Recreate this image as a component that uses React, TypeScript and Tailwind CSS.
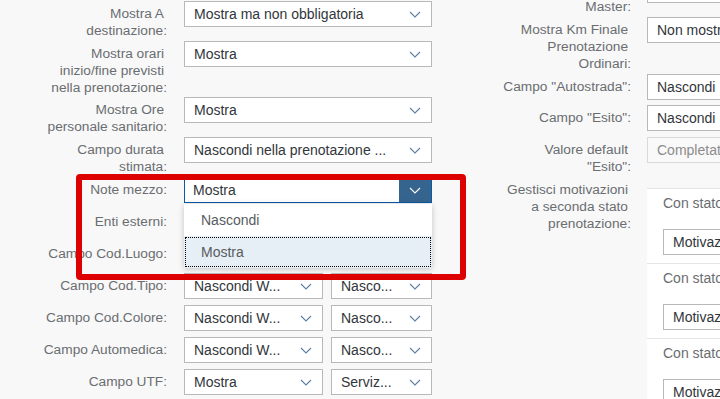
import React from "react";

type Field = { value: string; w?: string; disabled?: boolean };

function Chevron({ className = "" }: { className?: string }) {
  return (
    <svg width="12" height="7" viewBox="0 0 12 7" className={className}>
      <path d="M1 1l5 5 5-5" fill="none" stroke="currentColor" strokeWidth="1.1" />
    </svg>
  );
}

function Select({ value, w = "w-[248px]", disabled }: Field) {
  return (
    <div
      className={`flex h-[26px] shrink-0 items-center border ${w} ${
        disabled ? "border-[#d9d9d9] bg-[#f9f9f9] text-[#8c8c8c]" : "border-[#b8b8b8] bg-white text-[#32363a]"
      }`}
    >
      <span className="flex-1 overflow-hidden whitespace-nowrap pl-[9px]">{value}</span>
      {!disabled && (
        <span className="flex w-[32px] shrink-0 justify-center text-[#5b7ea3]">
          <Chevron />
        </span>
      )}
    </div>
  );
}

function Label({ lines, width }: { lines: string[]; width: string }) {
  return (
    <div className={`${width} shrink-0 pt-[4px] text-right text-[13.7px] leading-[17px] text-[#6a6d70]`}>
      {lines.map((l, i) => (
        <div key={i} className={`whitespace-nowrap ${i < lines.length - 1 ? "pr-[3px]" : ""}`}>
          {l}
        </div>
      ))}
    </div>
  );
}

function Row({ lines, h, fields, right }: { lines: string[]; h: string; fields: Field[]; right?: boolean }) {
  return (
    <div className={`flex ${h}`}>
      <Label lines={lines} width={right ? "w-[141px]" : "w-[167px]"} />
      <div className={`flex gap-[8px] ${right ? "ml-[16px]" : "ml-[17px]"}`}>
        {fields.map((f, i) => (
          <Select key={i} {...f} />
        ))}
      </div>
    </div>
  );
}

function StatusBlock() {
  return (
    <div className="h-[75px] border-b border-[#e5e5e5] pl-[16px] pt-[6px]">
      <div className="whitespace-nowrap leading-[17px] text-[#6a6d70]">Con stato Completata:</div>
      <div className="mt-[17px]">
        <Select value="Motivazioni standard" />
      </div>
    </div>
  );
}

export default function App() {
  return (
    <div className="relative h-[399px] w-[720px] overflow-hidden bg-[#f8f8f8] font-['Liberation_Sans',Arial,sans-serif] text-[14px]">
      <div className="flex">
        {/* left column */}
        <div className="w-[490px] shrink-0 pt-[1px]">
          <Row lines={["Mostra A", "destinazione:"]} h="h-[40px]" fields={[{ value: "Mostra ma non obbligatoria" }]} />
          <Row lines={["Mostra orari", "inizio/fine previsti", "nella prenotazione:"]} h="h-[56px]" fields={[{ value: "Mostra" }]} />
          <Row lines={["Mostra Ore", "personale sanitario:"]} h="h-[40px]" fields={[{ value: "Mostra" }]} />
          <Row lines={["Campo durata", "stimata:"]} h="h-[40px]" fields={[{ value: "Nascondi nella prenotazione ..." }]} />
          {/* focused select */}
          <div className="flex h-[32px]">
            <Label lines={["Note mezzo:"]} width="w-[167px]" />
            <div className="ml-[17px] flex h-[26px] w-[248px] items-center border border-[#0a5aa6] bg-white text-[#32363a]">
              <span className="flex-1 pl-[8px]">Mostra</span>
              <span className="flex h-full w-[32px] items-center justify-center bg-[#35648e] text-white">
                <Chevron />
              </span>
            </div>
          </div>
          <Row lines={["Enti esterni:"]} h="h-[32px]" fields={[{ value: "Nascondi" }]} />
          <Row lines={["Campo Cod.Luogo:"]} h="h-[32px]" fields={[{ value: "Nascondi W...", w: "w-[139px]" }, { value: "Nasco...", w: "w-[101px]" }]} />
          <Row lines={["Campo Cod.Tipo:"]} h="h-[32px]" fields={[{ value: "Nascondi W...", w: "w-[139px]" }, { value: "Nasco...", w: "w-[101px]" }]} />
          <Row lines={["Campo Cod.Colore:"]} h="h-[32px]" fields={[{ value: "Nascondi W...", w: "w-[139px]" }, { value: "Nasco...", w: "w-[101px]" }]} />
          <Row lines={["Campo Automedica:"]} h="h-[32px]" fields={[{ value: "Nascondi W...", w: "w-[139px]" }, { value: "Nasco...", w: "w-[101px]" }]} />
          <Row lines={["Campo UTF:"]} h="h-[32px]" fields={[{ value: "Mostra", w: "w-[139px]" }, { value: "Serviz...", w: "w-[101px]" }]} />
        </div>

        {/* right column */}
        <div className="mt-[-23px] flex-1">
          <Row right lines={["Mostra Codice", "Master:"]} h="h-[40px]" fields={[{ value: "Mostra" }]} />
          <Row right lines={["Mostra Km Finale", "Prenotazione", "Ordinari:"]} h="h-[57px]" fields={[{ value: "Non mostrare" }]} />
          <Row right lines={['Campo "Autostrada":']} h="h-[31px]" fields={[{ value: "Nascondi" }]} />
          <Row right lines={['Campo "Esito":']} h="h-[32px]" fields={[{ value: "Nascondi" }]} />
          <Row right lines={["Valore default", '"Esito":']} h="h-[40px]" fields={[{ value: "Completata", disabled: true }]} />
          <div className="flex">
            <Label lines={["Gestisci motivazioni", "a seconda stato", "prenotazione:"]} width="w-[141px]" />
            <div className="ml-[16px] mt-[11px] w-[300px] border-t border-[#e5e5e5] bg-white">
              <StatusBlock />
              <StatusBlock />
              <StatusBlock />
            </div>
          </div>
        </div>
      </div>

      {/* open dropdown list */}
      <div className="absolute left-[184px] top-[204px] w-[248px] bg-white shadow-[0_1px_6px_rgba(0,0,0,0.22)]">
        <div className="flex h-[32px] items-center pl-[17px] text-[#585b5e]">Nascondi</div>
        <div className="flex h-[32px] items-center bg-[#e6eef6] pl-[17px] text-[#585b5e] outline-1 -outline-offset-2 outline-dotted outline-black">
          Mostra
        </div>
      </div>

      {/* red highlight annotation */}
      <div className="pointer-events-none absolute left-[76px] top-[174px] h-[106px] w-[390px] rounded-[4px] border-[6px] border-[#dc0000]" />
    </div>
  );
}
